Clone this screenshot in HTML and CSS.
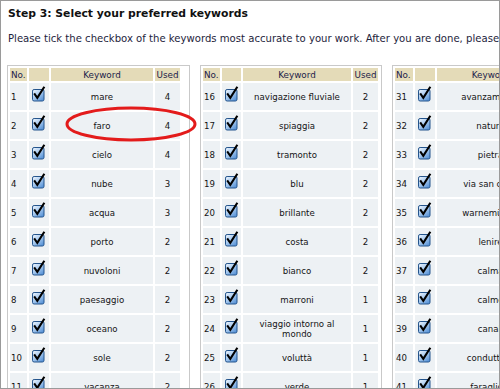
FILE: index.html
```html
<!DOCTYPE html>
<html>
<head>
<meta charset="utf-8">
<link rel="stylesheet" href="styles.css">
</head>
<body>
<svg width="0" height="0" class="defs">
  <defs>
    <linearGradient id="cbg" x1="0" y1="0" x2="0.8" y2="1">
      <stop offset="0" stop-color="#f2f8ff"/>
      <stop offset="0.5" stop-color="#a9cbf0"/>
      <stop offset="1" stop-color="#5792d6"/>
    </linearGradient>
    <symbol id="cb" viewBox="0 0 16 16">
      <rect x="1.5" y="3.5" width="11.5" height="11.5" rx="1.6" fill="url(#cbg)" stroke="#24548c" stroke-width="1"/>
      <path d="M3.8 8.3 L6.3 11.8 L12.8 1.6" fill="none" stroke="#000" stroke-width="2.1" stroke-linecap="square" stroke-linejoin="miter"/>
    </symbol>
  </defs>
</svg>
<div class="frame">
  <h1 class="title">Step 3: Select your preferred keywords</h1>
  <p class="intro">Please tick the checkbox of the keywords most accurate to your work. After you are done, please click the button below.</p>
  <div class="boxes">
    <div class="box box1">
      <table class="kw t1">
        <colgroup><col class="c-no"><col class="c-cb"><col class="c-kw1"><col class="c-used"></colgroup>
        <thead><tr><th class="h-no">No.</th><th></th><th>Keyword</th><th>Used</th></tr></thead>
        <tbody>
          <tr><td class="no">1</td><td class="cbc"><svg class="cb"><use href="#cb"/></svg></td><td class="word">mare</td><td class="used">4</td></tr>
          <tr><td class="no">2</td><td class="cbc"><svg class="cb"><use href="#cb"/></svg></td><td class="word">faro</td><td class="used">4</td></tr>
          <tr><td class="no">3</td><td class="cbc"><svg class="cb"><use href="#cb"/></svg></td><td class="word">cielo</td><td class="used">4</td></tr>
          <tr><td class="no">4</td><td class="cbc"><svg class="cb"><use href="#cb"/></svg></td><td class="word">nube</td><td class="used">3</td></tr>
          <tr><td class="no">5</td><td class="cbc"><svg class="cb"><use href="#cb"/></svg></td><td class="word">acqua</td><td class="used">3</td></tr>
          <tr><td class="no">6</td><td class="cbc"><svg class="cb"><use href="#cb"/></svg></td><td class="word">porto</td><td class="used">2</td></tr>
          <tr><td class="no">7</td><td class="cbc"><svg class="cb"><use href="#cb"/></svg></td><td class="word">nuvoloni</td><td class="used">2</td></tr>
          <tr><td class="no">8</td><td class="cbc"><svg class="cb"><use href="#cb"/></svg></td><td class="word">paesaggio</td><td class="used">2</td></tr>
          <tr><td class="no">9</td><td class="cbc"><svg class="cb"><use href="#cb"/></svg></td><td class="word">oceano</td><td class="used">2</td></tr>
          <tr><td class="no">10</td><td class="cbc"><svg class="cb"><use href="#cb"/></svg></td><td class="word">sole</td><td class="used">2</td></tr>
          <tr><td class="no">11</td><td class="cbc"><svg class="cb"><use href="#cb"/></svg></td><td class="word">vacanza</td><td class="used">2</td></tr>
        </tbody>
      </table>
    </div>
    <div class="box box2">
      <table class="kw t2">
        <colgroup><col class="c-no"><col class="c-cb2"><col class="c-kw2"><col class="c-used"></colgroup>
        <thead><tr><th class="h-no">No.</th><th></th><th>Keyword</th><th>Used</th></tr></thead>
        <tbody>
          <tr><td class="no">16</td><td class="cbc"><svg class="cb"><use href="#cb"/></svg></td><td class="word">navigazione fluviale</td><td class="used">2</td></tr>
          <tr><td class="no">17</td><td class="cbc"><svg class="cb"><use href="#cb"/></svg></td><td class="word">spiaggia</td><td class="used">2</td></tr>
          <tr><td class="no">18</td><td class="cbc"><svg class="cb"><use href="#cb"/></svg></td><td class="word">tramonto</td><td class="used">2</td></tr>
          <tr><td class="no">19</td><td class="cbc"><svg class="cb"><use href="#cb"/></svg></td><td class="word">blu</td><td class="used">2</td></tr>
          <tr><td class="no">20</td><td class="cbc"><svg class="cb"><use href="#cb"/></svg></td><td class="word">brillante</td><td class="used">2</td></tr>
          <tr><td class="no">21</td><td class="cbc"><svg class="cb"><use href="#cb"/></svg></td><td class="word">costa</td><td class="used">2</td></tr>
          <tr><td class="no">22</td><td class="cbc"><svg class="cb"><use href="#cb"/></svg></td><td class="word">bianco</td><td class="used">2</td></tr>
          <tr><td class="no">23</td><td class="cbc"><svg class="cb"><use href="#cb"/></svg></td><td class="word">marroni</td><td class="used">1</td></tr>
          <tr><td class="no">24</td><td class="cbc"><svg class="cb"><use href="#cb"/></svg></td><td class="word">viaggio intorno al mondo</td><td class="used">1</td></tr>
          <tr><td class="no">25</td><td class="cbc"><svg class="cb"><use href="#cb"/></svg></td><td class="word">voluttà</td><td class="used">1</td></tr>
          <tr><td class="no">26</td><td class="cbc"><svg class="cb"><use href="#cb"/></svg></td><td class="word">verde</td><td class="used">1</td></tr>
        </tbody>
      </table>
    </div>
    <div class="box box3">
      <table class="kw t3">
        <colgroup><col class="c-no3"><col class="c-cb"><col class="c-kw3"><col class="c-used"></colgroup>
        <thead><tr><th class="h-no">No.</th><th></th><th>Keyword</th><th>Used</th></tr></thead>
        <tbody>
          <tr><td class="no">31</td><td class="cbc"><svg class="cb"><use href="#cb"/></svg></td><td class="word">avanzamento</td><td class="used">1</td></tr>
          <tr><td class="no">32</td><td class="cbc"><svg class="cb"><use href="#cb"/></svg></td><td class="word">natura</td><td class="used">1</td></tr>
          <tr><td class="no">33</td><td class="cbc"><svg class="cb"><use href="#cb"/></svg></td><td class="word">pietra</td><td class="used">1</td></tr>
          <tr><td class="no">34</td><td class="cbc"><svg class="cb"><use href="#cb"/></svg></td><td class="word">via san carlo</td><td class="used">1</td></tr>
          <tr><td class="no">35</td><td class="cbc"><svg class="cb"><use href="#cb"/></svg></td><td class="word">warnemünde</td><td class="used">1</td></tr>
          <tr><td class="no">36</td><td class="cbc"><svg class="cb"><use href="#cb"/></svg></td><td class="word">lenire</td><td class="used">1</td></tr>
          <tr><td class="no">37</td><td class="cbc"><svg class="cb"><use href="#cb"/></svg></td><td class="word">calma</td><td class="used">1</td></tr>
          <tr><td class="no">38</td><td class="cbc"><svg class="cb"><use href="#cb"/></svg></td><td class="word">calmo</td><td class="used">1</td></tr>
          <tr><td class="no">39</td><td class="cbc"><svg class="cb"><use href="#cb"/></svg></td><td class="word">canali</td><td class="used">1</td></tr>
          <tr><td class="no">40</td><td class="cbc"><svg class="cb"><use href="#cb"/></svg></td><td class="word">conduttura</td><td class="used">1</td></tr>
          <tr><td class="no">41</td><td class="cbc"><svg class="cb"><use href="#cb"/></svg></td><td class="word">faraglioni</td><td class="used">1</td></tr>
        </tbody>
      </table>
    </div>
  </div>
  <svg class="ellipse" width="140" height="40" viewBox="0 0 140 40">
    <ellipse cx="66" cy="18" rx="64" ry="16" fill="none" stroke="#e31b1b" stroke-width="3"/>
  </svg>
</div>
</body>
</html>
```
FILE: styles.css
```css
html, body {
  margin: 0;
  padding: 0;
  background: #fff;
}
.defs {
  position: absolute;
  width: 0;
  height: 0;
}
.frame {
  position: relative;
  width: 500px;
  height: 389px;
  box-sizing: border-box;
  border: 1px solid #9a9a9a;
  overflow: hidden;
  font-family: "DejaVu Sans", Verdana, sans-serif;
  color: #111;
}
.title {
  margin: 0;
  padding: 6px 0 0 7px;
  font-size: 10.8px;
  font-weight: bold;
  line-height: 13px;
  white-space: nowrap;
  color: #111;
}
.intro {
  margin: 13px 0 0 0;
  padding-left: 7px;
  font-size: 10.1px;
  line-height: 12px;
  white-space: nowrap;
  color: #1e1e3c;
}
.boxes {
  display: flex;
  gap: 10px;
  margin: 20px 0 0 6px;
  width: 700px;
}
.box {
  flex: none;
  border: 1px solid #c9c9c9;
  background: #fff;
}
.box1 { width: 181px; }
.box2 { width: 180px; }
.box3 { width: 180px; }
.kw {
  border-collapse: separate;
  border-spacing: 2px;
  table-layout: fixed;
  font-size: 8.6px;
  line-height: 10px;
}
.t1 { width: 174px; }
.t2 { width: 179px; }
.t3 { width: 180px; }
.c-no { width: 17px; }
.c-no3 { width: 18px; }
.c-cb { width: 20px; }
.c-cb2 { width: 19px; }
.c-kw1 { width: 102px; }
.c-kw2 { width: 108px; }
.c-kw3 { width: 106px; }
.c-used { width: 25px; }
.kw th {
  background: #e4dbb8;
  height: 13px;
  padding: 0;
  font-weight: normal;
  color: #1c1c4a;
  text-align: center;
  font-size: 8.8px;
}
.kw th.h-no {
  text-align: left;
  padding-left: 1px;
}
.kw td {
  background: #edf1f4;
  height: 27px;
  padding: 0;
  text-align: center;
  vertical-align: middle;
  color: #141414;
}
.kw td.no {
  text-align: left;
  padding-left: 1px;
}
.kw td.word {
  padding: 0 5px;
}
.kw td.cbc {
  line-height: 0;
}
.cb {
  width: 16px;
  height: 16px;
  display: inline-block;
  vertical-align: middle;
  margin-top: -5px;
}
.ellipse {
  position: absolute;
  left: 64px;
  top: 105px;
}
```
